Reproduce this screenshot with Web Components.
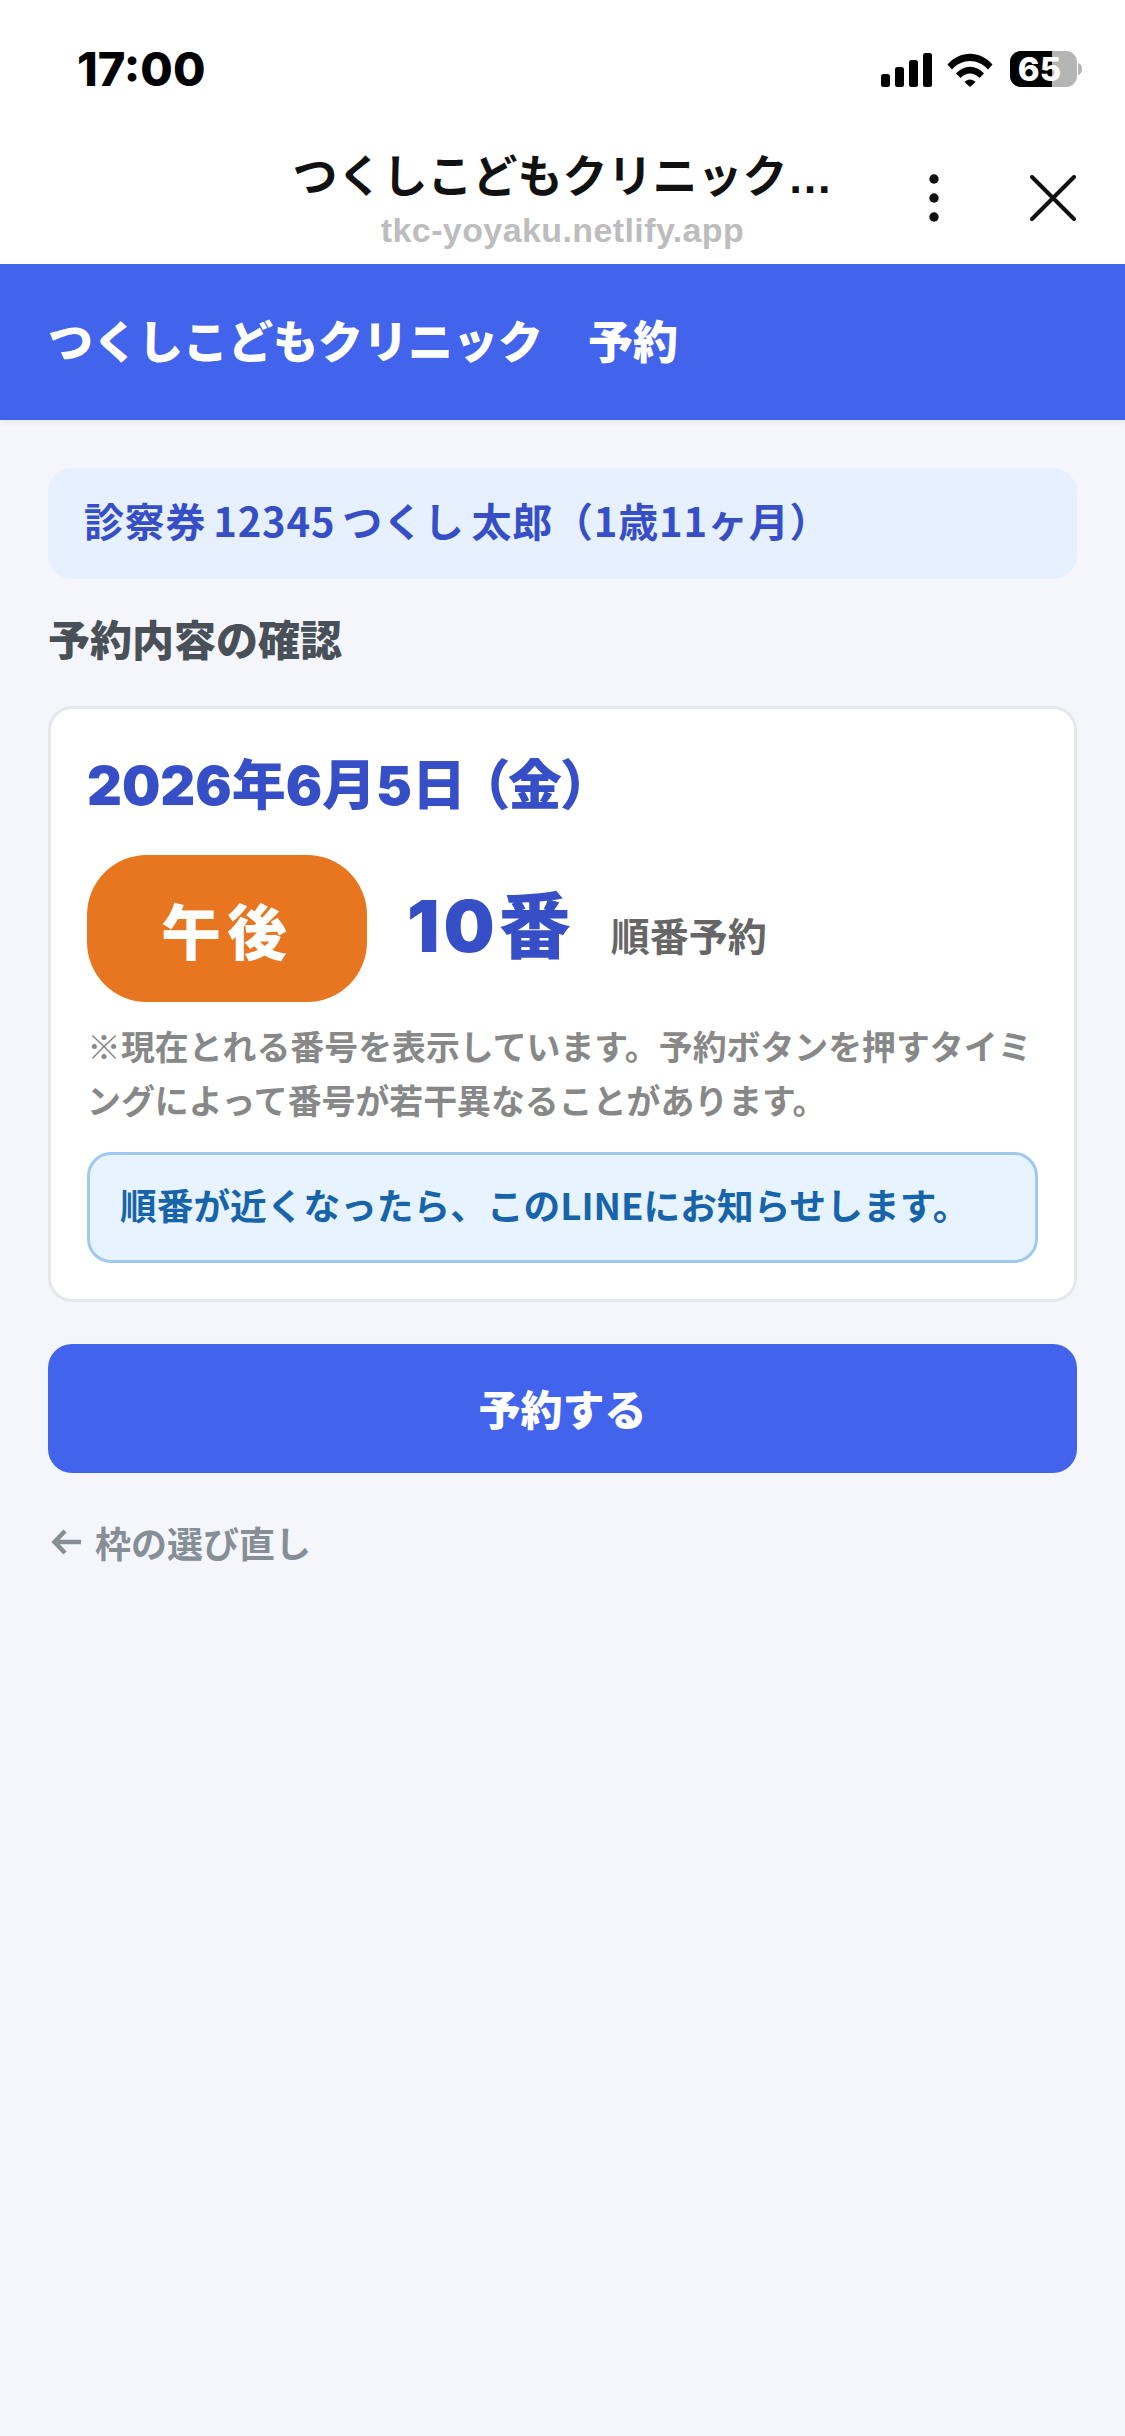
<!DOCTYPE html>
<html lang="ja">
<head>
<meta charset="utf-8">
<title>つくしこどもクリニック 予約</title>
<style>
    html, body {
        margin: 0;
        padding: 0;
        background-color: #f4f6fb;
    }
    body {
        width: 1125px;
        min-height: 2436px;
        font-family: "Noto Sans CJK JP", sans-serif;
    }
</style>
</head>
<body>
<status-bar time="17:00" battery="65"></status-bar>
<browser-bar url="tkc-yoyaku.netlify.app">つくしこどもクリニック…</browser-bar>
<app-header>つくしこどもクリニック　予約</app-header>
<page-main>
    <patient-banner>診察券 12345 つくし 太郎（1歳11ヶ月）</patient-banner>
    <section-title>予約内容の確認</section-title>
    <confirm-card date="2026年6月5日" weekday="（金）" period="午後" number="10" unit="番" kind="順番予約">
        <span slot="note">※現在とれる番号を表示しています。予約ボタンを押すタイミングによって番号が若干異なることがあります。</span>
        <span slot="notice">順番が近くなったら、このLINEにお知らせします。</span>
    </confirm-card>
    <primary-button>予約する</primary-button>
    <back-link>枠の選び直し</back-link>
</page-main>

<script>
class StatusBar extends HTMLElement
{
    connectedCallback()
    {
        let root = this.attachShadow({mode: "open"});
        root.innerHTML = `
        <style>
            :host {
                display: flex;
                height: 130px;
                box-sizing: border-box;
                padding: 51px 43px 0 77px;
                justify-content: space-between;
                align-items: flex-start;
                background-color: #fff;
                color: #000;
            }
            .time {
                font-family: "Inter", sans-serif;
                font-weight: 800;
                font-size: 47px;
                line-height: 36px;
                height: 36px;
            }
            .icons {
                display: flex;
                align-items: flex-start;
                gap: 15px;
            }
            svg { display: block; }
            .battery {
                position: relative;
                display: flex;
                width: 72px;
                height: 36px;
                margin-left: 2px;
            }
            .battery svg { position: absolute; left: 0; top: 0; }
            .battery span {
                position: relative;
                width: 67px;
                text-align: center;
                margin-left: -4px;
                font-family: "Inter", sans-serif;
                font-weight: 800;
                font-size: 33px;
                line-height: 36px;
                color: #fff;
            }
        </style>
        <div class="time">${this.getAttribute("time")}</div>
        <div class="icons">
            <svg width="51" height="34" viewBox="0 0 51 34" style="margin-top:2px">
                <rect x="0" y="21" width="9" height="13" rx="2.5"/>
                <rect x="14" y="14" width="9" height="20" rx="2.5"/>
                <rect x="28" y="7" width="9" height="27" rx="2.5"/>
                <rect x="42" y="0" width="9" height="34" rx="2.5"/>
            </svg>
            <svg width="46" height="34" viewBox="0 0 46 34" style="margin-top:2px">
                <path d="M0.5 11.5 C13 -3 33 -3 45.5 11.5 L41 16.5 C31 5 15 5 5 16.5 Z"/>
                <path d="M9 20.5 C17 11.5 29 11.5 37 20.5 L32.5 25 C27 19 19 19 13.5 25 Z"/>
                <path d="M17.5 29 C20.5 25.5 25.5 25.5 28.5 29 L23 34 Z"/>
            </svg>
            <div class="battery">
                <svg width="72" height="36" viewBox="0 0 72 36">
                    <path d="M68 12 C70.5 12.5 72 15 72 18 C72 21 70.5 23.5 68 24 Z" fill="#b5b5b5"/>
                    <rect x="0" y="0" width="67" height="36" rx="11" fill="#b5b5b5"/>
                    <path d="M11 0 H42 V36 H11 A11 11 0 0 1 0 25 V11 A11 11 0 0 1 11 0 Z" fill="#000"/>
                </svg>
                <span>${this.getAttribute("battery")}</span>
            </div>
        </div>
        `;
    }
}

class BrowserBar extends HTMLElement
{
    connectedCallback()
    {
        let root = this.attachShadow({mode: "open"});
        root.innerHTML = `
        <style>
            :host {
                display: grid;
                grid-template-columns: 1fr auto 1fr;
                height: 134px;
                box-sizing: border-box;
                padding: 19px 49px 0;
                background-color: #fff;
                align-items: start;
            }
            .titles {
                grid-column: 2;
                display: flex;
                flex-direction: column;
                align-items: center;
            }
            .title {
                font-size: 45px;
                line-height: 58px;
                font-weight: 700;
                color: #111;
                font-family: "Liberation Sans", "Noto Sans CJK JP", sans-serif;
                white-space: nowrap;
            }
            .url {
                margin-top: 4px;
                font-family: "Liberation Sans", sans-serif;
                font-weight: 700;
                font-size: 34px;
                line-height: 38px;
                letter-spacing: 0.4px;
                color: #bdbdbd;
            }
            .actions {
                grid-column: 3;
                display: flex;
                justify-content: flex-end;
                align-items: flex-start;
                gap: 91px;
                margin-top: 26px;
            }
            svg { display: block; }
        </style>
        <div class="titles">
            <div class="title"><slot></slot></div>
            <div class="url">${this.getAttribute("url")}</div>
        </div>
        <div class="actions">
            <svg width="10" height="48" viewBox="0 0 10 48" style="margin-top:-1px">
                <circle cx="5" cy="5" r="4.7" fill="#111"/>
                <circle cx="5" cy="24" r="4.7" fill="#111"/>
                <circle cx="5" cy="43" r="4.7" fill="#111"/>
            </svg>
            <svg width="46" height="46" viewBox="0 0 46 46">
                <path d="M2 2 L44 44 M44 2 L2 44" stroke="#111" stroke-width="4" stroke-linecap="round" fill="none"/>
            </svg>
        </div>
        `;
    }
}

class AppHeader extends HTMLElement
{
    constructor()
    {
        super();
        this.attachShadow({mode: "open"}).innerHTML = `
        <style>
            :host {
                display: flex;
                align-items: center;
                height: 156px;
                box-sizing: border-box;
                padding: 0 48px 5px;
                background-color: #4263eb;
                color: #fff;
                font-size: 45px;
                font-weight: 900;
                box-shadow: 0 3px 6px rgba(0, 0, 0, 0.05);
                position: relative;
            }
        </style>
        <slot></slot>
        `;
    }
}

class PageMain extends HTMLElement
{
    constructor()
    {
        super();
        this.attachShadow({mode: "open"}).innerHTML = `
        <style>
            :host {
                display: flex;
                flex-direction: column;
                padding: 48px 48px 0;
            }
        </style>
        <slot></slot>
        `;
    }
}

class PatientBanner extends HTMLElement
{
    constructor()
    {
        super();
        this.attachShadow({mode: "open"}).innerHTML = `
        <style>
            :host {
                display: flex;
                align-items: center;
                height: 111px;
                box-sizing: border-box;
                padding: 0 36px 8px;
                border-radius: 24px;
                background-color: #e7f0ff;
                color: #364fc7;
                font-size: 40px;
                font-weight: 700;
                word-spacing: -3px;
                letter-spacing: 0.8px;
            }
        </style>
        <slot></slot>
        `;
    }
}

class SectionTitle extends HTMLElement
{
    constructor()
    {
        super();
        this.attachShadow({mode: "open"}).innerHTML = `
        <style>
            :host {
                display: block;
                margin: 27px 0 37px;
                color: #495057;
                font-size: 42px;
                line-height: 63px;
                font-weight: 900;
            }
        </style>
        <slot></slot>
        `;
    }
}

class ConfirmCard extends HTMLElement
{
    connectedCallback()
    {
        let root = this.attachShadow({mode: "open"});
        root.innerHTML = `
        <style>
            :host {
                display: block;
                box-sizing: border-box;
                padding: 42px 36px 36px;
                border: 3px solid #e5e7eb;
                border-radius: 24px;
                background-color: #fff;
            }
            .date {
                color: #364fc7;
                font-family: "Inter", "Noto Sans CJK JP", sans-serif;
                font-size: 54px;
                line-height: 70px;
                font-weight: 900;
            }
            .weekday {
                margin-left: 15px;
                font-feature-settings: "palt";
            }
            .slot {
                display: flex;
                align-items: center;
                margin-top: 34px;
            }
            .period {
                display: flex;
                width: 280px;
                height: 147px;
                justify-content: center;
                align-items: center;
                border-radius: 60px;
                background-color: #e8751f;
                color: #fff;
                font-size: 60px;
                font-weight: 900;
                letter-spacing: 6px;
            }
            .number {
                margin-left: 40px;
                margin-bottom: 6px;
                color: #364fc7;
                font-family: "Inter", "Noto Sans CJK JP", sans-serif;
                font-size: 72px;
                line-height: 90px;
                font-weight: 900;
            }
            .number .digits {
                letter-spacing: 4px;
            }
            .kind {
                margin-left: 40px;
                margin-top: 10px;
                color: #666;
                font-size: 39px;
                font-weight: 600;
            }
            .note {
                margin-top: 17px;
                color: #888;
                font-size: 33.9px;
                line-height: 54px;
                font-weight: 700;
            }
            .notice {
                display: flex;
                align-items: center;
                height: 111px;
                box-sizing: border-box;
                margin-top: 25px;
                padding: 0 30px 7px;
                border: 3px solid #a0c9f0;
                border-radius: 24px;
                background-color: #e7f3fe;
                color: #1864ab;
                font-size: 36.7px;
                font-weight: 700;
            }
        </style>
        <div class="date">${this.getAttribute("date")}<span class="weekday">${this.getAttribute("weekday")}</span></div>
        <div class="slot">
            <div class="period">${this.getAttribute("period")}</div>
            <div class="number"><span class="digits">${this.getAttribute("number")}</span>${this.getAttribute("unit")}</div>
            <div class="kind">${this.getAttribute("kind")}</div>
        </div>
        <div class="note"><slot name="note"></slot></div>
        <div class="notice"><slot name="notice"></slot></div>
        `;
    }
}

class PrimaryButton extends HTMLElement
{
    constructor()
    {
        super();
        this.attachShadow({mode: "open"}).innerHTML = `
        <style>
            :host {
                display: flex;
                height: 129px;
                box-sizing: border-box;
                padding-bottom: 2px;
                margin-top: 42px;
                justify-content: center;
                align-items: center;
                border-radius: 24px;
                background-color: #4263eb;
                color: #fff;
                font-size: 42px;
                font-weight: 900;
            }
        </style>
        <slot></slot>
        `;
    }
}

class BackLink extends HTMLElement
{
    constructor()
    {
        super();
        this.attachShadow({mode: "open"}).innerHTML = `
        <style>
            :host {
                display: flex;
                align-items: center;
                gap: 12px;
                margin-top: 42px;
                color: #868e96;
                font-size: 36px;
                line-height: 54px;
                font-weight: 700;
            }
            svg { display: block; margin-left: 3px; }
        </style>
        <svg width="32" height="28" viewBox="0 0 32 28">
            <path d="M30 14 H4 M14 3 L3.5 14 L14 25" stroke="#868e96" stroke-width="4.5" fill="none"/>
        </svg>
        <span><slot></slot></span>
        `;
    }
}

customElements.define("status-bar", StatusBar);
customElements.define("browser-bar", BrowserBar);
customElements.define("app-header", AppHeader);
customElements.define("page-main", PageMain);
customElements.define("patient-banner", PatientBanner);
customElements.define("section-title", SectionTitle);
customElements.define("confirm-card", ConfirmCard);
customElements.define("primary-button", PrimaryButton);
customElements.define("back-link", BackLink);
</script>
</body>
</html>
